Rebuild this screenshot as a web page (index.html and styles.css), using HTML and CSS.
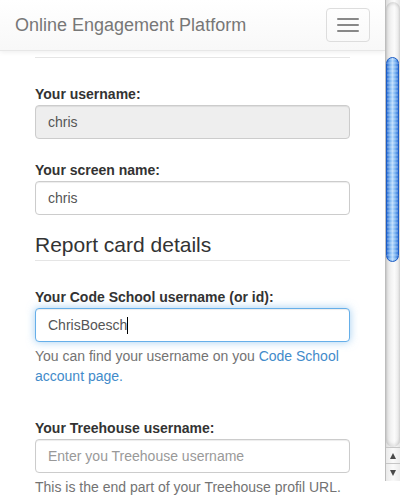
FILE: index.html
```html
<!DOCTYPE html>
<html lang="en">
<head>
<meta charset="utf-8">
<title>Online Engagement Platform</title>
<link rel="stylesheet" href="styles.css">
</head>
<body>
<div class="window">
  <div class="page">
    <nav class="navbar">
      <span class="brand">Online Engagement Platform</span>
      <button class="toggle" type="button" aria-label="Toggle navigation">
        <span class="bar"></span>
        <span class="bar"></span>
        <span class="bar"></span>
      </button>
    </nav>
    <main class="content">
      <hr class="rule">
      <div class="form-group">
        <label class="label">Your username:</label>
        <div class="input input-disabled">chris</div>
      </div>
      <div class="form-group form-group-last">
        <label class="label">Your screen name:</label>
        <div class="input">chris</div>
      </div>
      <div class="legend">Report card details</div>
      <div class="form-group form-group-help">
        <label class="label">Your Code School username (or id):</label>
        <div class="input input-focus">ChrisBoesch<span class="caret"></span></div>
        <p class="help">You can find your username on you <a class="link" href="#">Code School</a><br><a class="link" href="#">account page.</a></p>
      </div>
      <div class="form-group">
        <label class="label">Your Treehouse username:</label>
        <div class="input placeholder">Enter you Treehouse username</div>
        <p class="help">This is the end part of your Treehouse profil URL.</p>
      </div>
    </main>
  </div>
  <div class="scrollbar">
    <div class="sb-track">
      <div class="sb-thumb"></div>
    </div>
    <div class="sb-btn sb-up"><span class="tri-up"></span></div>
    <div class="sb-btn sb-down"><span class="tri-down"></span></div>
  </div>
</div>
</body>
</html>
```
FILE: styles.css
```css
html, body {
  margin: 0;
  padding: 0;
  background: #fff;
}
body {
  font-family: "Liberation Sans", Arial, Helvetica, sans-serif;
  font-size: 14px;
  line-height: 20px;
  color: #333;
}
.window {
  display: flex;
  width: 400px;
  height: 496px;
  overflow: hidden;
}
.page {
  width: 385px;
  flex: none;
  overflow: hidden;
}
.navbar {
  height: 50px;
  border-bottom: 1px solid #e7e7e7;
  background: linear-gradient(to bottom, #ffffff 0%, #f8f8f8 100%);
  box-shadow: 0 1px 5px rgba(0, 0, 0, 0.075);
  display: flex;
  justify-content: space-between;
  align-items: flex-start;
  position: relative;
  z-index: 1;
}
.brand {
  padding: 15px;
  font-size: 18px;
  line-height: 20px;
  color: #777;
}
.toggle {
  margin: 8px 15px 0 0;
  padding: 9px 10px;
  border: 1px solid #ddd;
  border-radius: 4px;
  background: transparent;
  display: flex;
  flex-direction: column;
  gap: 4px;
}
.bar {
  display: block;
  width: 22px;
  height: 2px;
  border-radius: 1px;
  background: #888;
}
.content {
  padding: 0 35px;
}
.rule {
  margin: 6px 0 26px;
  border: 0;
  border-top: 1px solid #e5e5e5;
  height: 0;
}
.form-group {
  margin-bottom: 21px;
}
.form-group-last {
  margin-bottom: 15px;
}
.form-group-help {
  margin-bottom: 32px;
}
.label {
  display: block;
  font-weight: bold;
  font-size: 14px;
  line-height: 20px;
  margin-bottom: 1px;
  color: #333;
}
.input {
  box-sizing: border-box;
  height: 34px;
  padding: 6px 12px;
  border: 1px solid #ccc;
  border-radius: 4px;
  font-size: 14px;
  line-height: 20px;
  color: #555;
  background: #fff;
  box-shadow: inset 0 1px 1px rgba(0, 0, 0, 0.075);
  white-space: nowrap;
}
.input-disabled {
  background: #eee;
}
.input-focus {
  border-color: #66afe9;
  box-shadow: inset 0 1px 1px rgba(0, 0, 0, 0.075), 0 0 8px rgba(102, 175, 233, 0.6);
}
.placeholder {
  color: #999;
}
.caret {
  display: inline-block;
  width: 1px;
  height: 17px;
  background: #000;
  vertical-align: -4px;
}
.legend {
  font-size: 21px;
  line-height: 30px;
  color: #333;
  border-bottom: 1px solid #e5e5e5;
  margin-bottom: 26px;
}
.help {
  margin: 4px 0 0;
  color: #737373;
  line-height: 20px;
}
.link {
  color: #428bca;
  text-decoration: none;
}
.scrollbar {
  width: 15px;
  height: 481px;
  flex: none;
  box-sizing: border-box;
  border-left: 1px solid #bdbdbd;
  display: flex;
  flex-direction: column;
  background: linear-gradient(to right, #dcdcdc 0%, #f2f2f2 35%, #fbfbfb 60%, #e4e4e4 100%);
}
.sb-track {
  flex: 1;
  margin: 2px 0 0 0;
  border-radius: 7px;
  box-shadow: inset 0 2px 3px rgba(0, 0, 0, 0.12), inset 0 -3px 3px rgba(0, 0, 0, 0.08);
  padding-top: 55px;
}
.sb-thumb {
  width: 13px;
  height: 205px;
  box-sizing: border-box;
  border: 1px solid #1c5cc4;
  border-radius: 7px;
  background:
    repeating-linear-gradient(to bottom, rgba(255, 255, 255, 0.18) 0px, rgba(255, 255, 255, 0.18) 2px, rgba(0, 0, 0, 0) 2px, rgba(0, 0, 0, 0) 4px),
    linear-gradient(to right, #2f6fd4 0%, #79b2f0 25%, #b7dafc 50%, #79b2f0 75%, #3a79d8 100%);
}
.sb-btn {
  border-top: 1px solid #c6c6c6;
  display: flex;
  align-items: center;
  justify-content: center;
  background: linear-gradient(to right, #e9e9e9, #fafafa 50%, #ececec);
}
.sb-up {
  height: 15px;
}
.sb-down {
  height: 17px;
}
.tri-up {
  width: 0;
  height: 0;
  border-left: 3.5px solid transparent;
  border-right: 3.5px solid transparent;
  border-bottom: 6px solid #4a4a4a;
}
.tri-down {
  width: 0;
  height: 0;
  border-left: 3.5px solid transparent;
  border-right: 3.5px solid transparent;
  border-top: 6px solid #4a4a4a;
}
```
